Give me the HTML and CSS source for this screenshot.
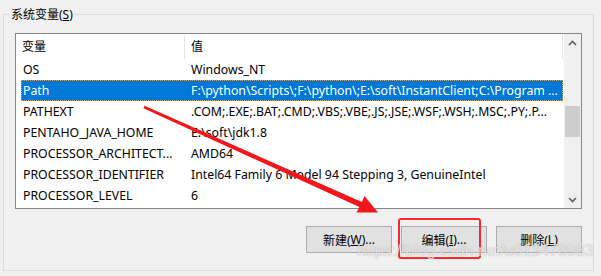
FILE: index.html
```html
<!DOCTYPE html>
<html>
<head>
<meta charset="utf-8">
<link rel="stylesheet" href="styles.css">
</head>
<body>
<div class="group">
  <div class="legend">系统变量(<u>S</u>)</div>
  <div class="listbox">
    <div class="content">
      <div class="header">
        <div class="hcell h1">变量</div>
        <div class="hcell h2">值</div>
      </div>
      <div class="row"><div class="cell c1">OS</div><div class="cell c2">Windows_NT</div></div>
      <div class="row selected"><div class="cell c1">Path</div><div class="cell c2">F:\python\Scripts\;F:\python\;E:\soft\InstantClient;C:\Program ...</div></div>
      <div class="row"><div class="cell c1">PATHEXT</div><div class="cell c2">.COM;.EXE;.BAT;.CMD;.VBS;.VBE;.JS;.JSE;.WSF;.WSH;.MSC;.PY;.P...</div></div>
      <div class="row"><div class="cell c1">PENTAHO_JAVA_HOME</div><div class="cell c2">E:\soft\jdk1.8</div></div>
      <div class="row"><div class="cell c1">PROCESSOR_ARCHITECT...</div><div class="cell c2">AMD64</div></div>
      <div class="row"><div class="cell c1">PROCESSOR_IDENTIFIER</div><div class="cell c2">Intel64 Family 6 Model 94 Stepping 3, GenuineIntel</div></div>
      <div class="row"><div class="cell c1">PROCESSOR_LEVEL</div><div class="cell c2">6</div></div>
    </div>
    <div class="scrollbar">
      <div class="sarrow">
        <svg width="9" height="6" viewBox="0 0 9 6"><path d="M1 5 L4.5 1.5 L8 5" fill="none" stroke="#606060" stroke-width="1.6"/></svg>
      </div>
      <div class="track"><div class="thumb"></div></div>
      <div class="sarrow">
        <svg width="9" height="6" viewBox="0 0 9 6"><path d="M1 1 L4.5 4.5 L8 1" fill="none" stroke="#606060" stroke-width="1.6"/></svg>
      </div>
    </div>
  </div>
  <div class="buttons">
    <div class="btn">新建(<u>W</u>)...</div>
    <div class="btn">编辑(<u>I</u>)...</div>
    <div class="btn">删除(<u>L</u>)</div>
  </div>
</div>
<div class="redbox"></div>
<svg class="arrow" width="601" height="276" viewBox="0 0 601 276">
  <polygon points="144.6,105.8 361.9,201.9 364.5,196 378,212.5 356.5,212.5 359.3,207 143.4,108.2" fill="#f5161b"/>
</svg>
<div class="watermark">https://blog.csdn.net/u013478983</div>
</body>
</html>
```
FILE: styles.css
```css
html, body {
  margin: 0;
  padding: 0;
}
body {
  width: 601px;
  height: 276px;
  background: #f0f0f0;
  font-family: "Noto Sans", "Noto Sans CJK SC", sans-serif;
  font-size: 12px;
  color: #000;
  overflow: hidden;
  position: relative;
}
.group {
  margin: 14px 0 0 3px;
  width: 591px;
  height: 257px;
  box-sizing: border-box;
  border: 1px solid #dcdcdc;
  padding: 0 11px;
}
.legend {
  display: block;
  width: fit-content;
  margin: -8px 0 0 -5px;
  padding: 0 1px;
  height: 15px;
  line-height: 15px;
  background: #f0f0f0;
}
.listbox {
  margin-top: 11px;
  width: 567px;
  height: 176px;
  box-sizing: border-box;
  border: 1px solid #828790;
  background: #fff;
  display: flex;
}
.content {
  width: 548px;
  overflow: hidden;
}
.header {
  display: flex;
  height: 25px;
}
.hcell {
  height: 24px;
  margin-top: 1px;
  line-height: 23px;
  box-sizing: border-box;
  border-right: 1px solid #e5e5e5;
  padding-left: 6px;
  white-space: nowrap;
}
.h1 { width: 169px; }
.h2 { width: 378px; padding-left: 6px; }
.row {
  display: flex;
  height: 21px;
  line-height: 21px;
  margin-left: 5px;
  width: 542px;
  box-sizing: border-box;
  white-space: nowrap;
  font-size: 12.3px;
}
.cell {
  overflow: hidden;
}
.c1 { width: 163px; padding-left: 2px; box-sizing: border-box; }
.c2 { flex: 1; padding-left: 7px; }
.selected {
  background: #0078d7;
  color: #fff;
  outline: 1px dotted #e0a050;
  outline-offset: -1px;
}
.scrollbar {
  width: 17px;
  background: #f0f0f0;
  display: flex;
  flex-direction: column;
}
.sarrow {
  height: 17px;
  display: flex;
  align-items: center;
  justify-content: center;
}
.track {
  flex: 1;
  padding-top: 55px;
}
.thumb {
  margin-left: 1px;
  width: 15px;
  height: 31px;
  background: #cdcdcd;
}
.buttons {
  margin-top: 17px;
  display: flex;
  justify-content: flex-end;
  gap: 9px;
}
.btn {
  width: 86px;
  height: 27px;
  box-sizing: border-box;
  border: 1px solid #adadad;
  background: #e1e1e1;
  display: flex;
  align-items: center;
  justify-content: center;
  white-space: nowrap;
}
.redbox {
  position: absolute;
  left: 398px;
  top: 218px;
  width: 83px;
  height: 41px;
  box-sizing: border-box;
  border: 2px solid #f52a2a;
  border-radius: 3px;
}
.arrow {
  position: absolute;
  left: 0;
  top: 0;
}
.watermark {
  position: absolute;
  left: 357px;
  top: 240px;
  font-family: "Liberation Sans", Arial, sans-serif;
  font-size: 16px;
  line-height: 22px;
  color: rgba(255, 255, 255, 0.6);
  text-shadow: 0 0 1px rgba(150, 150, 150, 0.4), 0 0 1px rgba(150, 150, 150, 0.4);
  white-space: nowrap;
}
```
